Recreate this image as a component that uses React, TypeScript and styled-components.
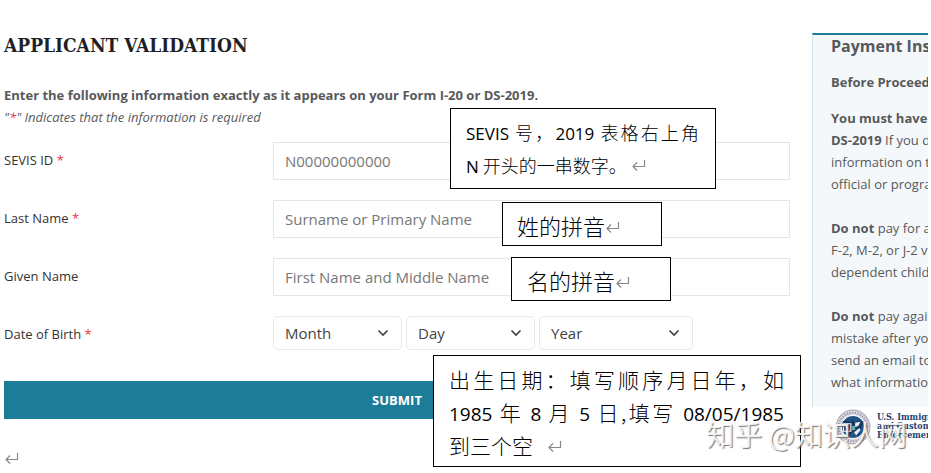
import React from "react";
import styled, { createGlobalStyle } from "styled-components";

const GlobalStyle = createGlobalStyle`
  * { box-sizing: border-box; }
  body {
    margin: 0;
    background: #fff;
    color: #58595b;
    font-family: "Open Sans", "Noto Sans", sans-serif;
    font-size: 13px;
  }
`;

const Page = styled.div`
  position: relative;
  display: grid;
  grid-template-columns: minmax(0, 1fr) 116px;
  column-gap: 22px;
  padding: 32px 3px 0 4px;
  overflow: hidden;
`;

const Main = styled.main`
  display: flex;
  flex-direction: column;
`;

const Title = styled.h1`
  margin: 0;
  color: #1f1f26;
  font: bold 19px/26px "Roboto Slab", "DejaVu Serif Condensed", "Liberation Serif", serif;
  white-space: nowrap;
`;

const Intro = styled.p`
  margin: 26px 0 0;
  font-size: 13px;
  line-height: 22px;
  font-weight: 700;
`;

const Hint = styled.p`
  margin: 0;
  font-size: 13px;
  line-height: 22px;
  font-style: italic;
`;

const Star = styled.span`
  color: #e8323c;
`;

const Form = styled.form`
  display: flex;
  flex-direction: column;
  margin-top: 14px;
`;

const Row = styled.div`
  position: relative;
  display: grid;
  grid-template-columns: 269px minmax(0, 1fr);
  min-height: 38px;
  margin-bottom: 20px;
`;

const Label = styled.label`
  color: #333;
  font-size: 13px;
  line-height: 36px;
`;

const TextInput = styled.input`
  width: 100%;
  height: 38px;
  padding: 0 11px;
  border: 1px solid #e3e5e6;
  background: #fff;
  color: #444;
  font: 15px/22px "Open Sans", sans-serif;
  &::placeholder { color: #777; opacity: 1; }
`;

const Selects = styled.div`
  display: flex;
  gap: 4px;
`;

const SelectBox = styled.div<{ $wide?: boolean }>`
  display: grid;
  align-items: center;
  width: ${(p) => (p.$wide ? 154 : 129)}px;
  height: 34px;
  svg {
    grid-area: 1 / 1;
    justify-self: end;
    margin-right: 13px;
    pointer-events: none;
  }
`;

const Select = styled.select`
  grid-area: 1 / 1;
  width: 100%;
  height: 34px;
  padding: 0 30px 0 11px;
  border: 1px solid #e6e8e9;
  border-radius: 5px;
  appearance: none;
  background: #fff;
  color: #444;
  font: 15px/22px "Open Sans", sans-serif;
`;

const Submit = styled.button`
  height: 38px;
  margin-top: 7px;
  border: 0;
  background: #1d7c97;
  color: #fff;
  font: bold 13px/22px "Open Sans", sans-serif;
`;

const Footer = styled.div`
  padding: 32px 0 8px;
  svg { display: block; }
`;

const Note = styled.div<{ $left: number; $top: number; $width: number; $size: number; $pad: string }>`
  position: absolute;
  z-index: 2;
  left: ${(p) => p.$left}px;
  top: ${(p) => p.$top}px;
  width: ${(p) => p.$width}px;
  padding: ${(p) => p.$pad};
  border: 1px solid #000;
  background: #fff;
  color: #000;
  font: 300 ${(p) => p.$size}px/33px "Noto Sans CJK SC", sans-serif;
  svg { vertical-align: baseline; }
`;

const Line = styled.div<{ $spread?: boolean }>`
  height: 33px;
  text-align: ${(p) => (p.$spread ? "justify" : "left")};
  text-align-last: ${(p) => (p.$spread ? "justify" : "left")};
  white-space: ${(p) => (p.$spread ? "normal" : "nowrap")};
`;

const Latin = styled.span<{ $size: number }>`
  font: 400 ${(p) => p.$size}px/22px "Open Sans", sans-serif;
`;

const Sidebar = styled.aside`
  align-self: start;
  margin-top: 1px;
  overflow: hidden;
  white-space: nowrap;
`;

const SidePanel = styled.div`
  padding: 0 0 14px 18px;
  border-top: 2px solid #1d7c97;
  border-left: 1px solid #d9e6ec;
  background: #f4f8fa;
`;

const SideTitle = styled.h2`
  margin: 0;
  font-size: 16px;
  line-height: 22px;
`;

const SideText = styled.p<{ $gap: number }>`
  margin: ${(p) => p.$gap}px 0 0;
  font-size: 13px;
  line-height: 22px;
`;

const Agency = styled.div`
  display: flex;
  align-items: flex-start;
  gap: 6px;
  padding: 2px 0 4px 23px;
  background: #fff;
  svg { flex: none; }
`;

const AgencyName = styled.div`
  padding-top: 4px;
  color: #24426f;
  font: bold 9px/9px "DejaVu Serif Condensed", "DejaVu Serif", serif;
`;

const Watermark = styled.div`
  position: absolute;
  z-index: 3;
  right: 24px;
  bottom: 22px;
  color: rgba(255, 255, 255, 0.85);
  font: 28px/36px "Noto Sans CJK SC", sans-serif;
  text-shadow: 1px 1px 1px rgba(90, 90, 90, 0.8);
  white-space: nowrap;
`;

const ReturnMark = () => (
  <svg width="15" height="15" viewBox="0 0 15 15" fill="none" stroke="#888" strokeWidth="1.200" aria-hidden="true">
    <path d="M13.500 2v6.500H2M6 4.500l-4 4 4 4" />
  </svg>
);

const Chevron = () => (
  <svg width="12" height="8" viewBox="0 0 12 8" fill="none" stroke="#3a3f45" strokeWidth="1.6" aria-hidden="true">
    <path d="M1.5 1.5 6 6l4.500-4.500" />
  </svg>
);

const Seal = () => (
  <svg width="36" height="36" viewBox="0 0 34 34" aria-hidden="true">
    <circle cx="17" cy="17" r="16" fill="#d9d6de" stroke="#a9a9ba" />
    <circle cx="17" cy="17" r="13.500" fill="none" stroke="#8e8fa6" strokeWidth="2" strokeDasharray="1 1.500" />
    <circle cx="17" cy="17" r="11" fill="#215485" stroke="#fff" />
    <path d="M7 12c4-2 6-1 8 1l2-3 2 3c2-2 5-3 8-1-1 5-3 7-6 8l2 5h-3l-3-4-3 4h-3l2-5c-3-1-5-3-6-8z" fill="#173a63" />
    <path d="M8 14h7v7H8z" fill="#3b3c73" stroke="#fff" />
    <path d="m9 15 5 5" stroke="#b65a60" />
    <path d="M19 13l5-1-2 4-3 1zM18 22l5-4 1 2-4 5z" fill="#e8eef4" />
    <path d="M16 16h3v4h-3z" fill="#63a9ae" />
  </svg>
);

const DateSelect = ({ label, wide }: { label: string; wide?: boolean }) => (
  <SelectBox $wide={wide}>
    <Select aria-label={label} id={label.toLowerCase()}>
      <option>{label}</option>
    </Select>
    <Chevron />
  </SelectBox>
);

export default function App() {
  return (
    <>
      <GlobalStyle />
      <Page>
        <Main>
          <Title>APPLICANT VALIDATION</Title>
          <Intro>Enter the following information exactly as it appears on your Form I-20 or DS-2019.</Intro>
          <Hint>"<Star>*</Star>" Indicates that the information is required</Hint>
          <Form onSubmit={(e) => e.preventDefault()}>
            <Row>
              <Label htmlFor="sevis">SEVIS ID <Star>*</Star></Label>
              <TextInput id="sevis" placeholder="N00000000000" />
              <Note $left={446} $top={-34} $width={266} $size={18} $pad="7px 16px 6px 15px">
                <Line $spread><Latin $size={17}>SEVIS</Latin> 号，<Latin $size={17}>2019</Latin> 表格右上角</Line>
                <Line><Latin $size={17}>N</Latin> 开头的一串数字。 <ReturnMark /></Line>
              </Note>
            </Row>
            <Row>
              <Label htmlFor="last">Last Name <Star>*</Star></Label>
              <TextInput id="last" placeholder="Surname or Primary Name" />
              <Note $left={498} $top={2} $width={160} $size={22} $pad="6px 14px 3px">
                <Line>姓的拼音<ReturnMark /></Line>
              </Note>
            </Row>
            <Row>
              <Label htmlFor="given">Given Name</Label>
              <TextInput id="given" placeholder="First Name and Middle Name" />
              <Note $left={507} $top={-1} $width={160} $size={22} $pad="6px 15px 3px">
                <Line>名的拼音<ReturnMark /></Line>
              </Note>
            </Row>
            <Row>
              <Label htmlFor="month">Date of Birth <Star>*</Star></Label>
              <Selects>
                <DateSelect label="Month" />
                <DateSelect label="Day" />
                <DateSelect label="Year" wide />
              </Selects>
              <Note $left={429} $top={39} $width={368} $size={21} $pad="7px 16px 4px 15px">
                <Line $spread>出生日期：填写顺序月日年，如</Line>
                <Line $spread><Latin $size={19}>1985</Latin> 年 <Latin $size={19}>8</Latin> 月 <Latin $size={19}>5</Latin> 日,填写 <Latin $size={19}>08/05/1985</Latin></Line>
                <Line>到三个空&nbsp;&nbsp; <ReturnMark /></Line>
              </Note>
            </Row>
            <Submit type="submit">SUBMIT</Submit>
          </Form>
          <Footer><ReturnMark /></Footer>
        </Main>
        <Sidebar>
          <SidePanel>
            <SideTitle>Payment Instructions</SideTitle>
            <SideText $gap={14}><b>Before Proceeding</b></SideText>
            <SideText $gap={14}>
              <b>You must have your Form</b><br />
              <b>DS-2019</b> If you do not<br />
              information on the form<br />
              official or program
            </SideText>
            <SideText $gap={22}>
              <b>Do not</b> pay for an<br />
              F-2, M-2, or J-2 visa<br />
              dependent children
            </SideText>
            <SideText $gap={22}>
              <b>Do not</b> pay again<br />
              mistake after you<br />
              send an email to<br />
              what information
            </SideText>
          </SidePanel>
          <Agency>
            <Seal />
            <AgencyName>U.S. Immigration<br />and Customs<br />Enforcement</AgencyName>
          </Agency>
        </Sidebar>
        <Watermark>知乎 @知识人网</Watermark>
      </Page>
    </>
  );
}
